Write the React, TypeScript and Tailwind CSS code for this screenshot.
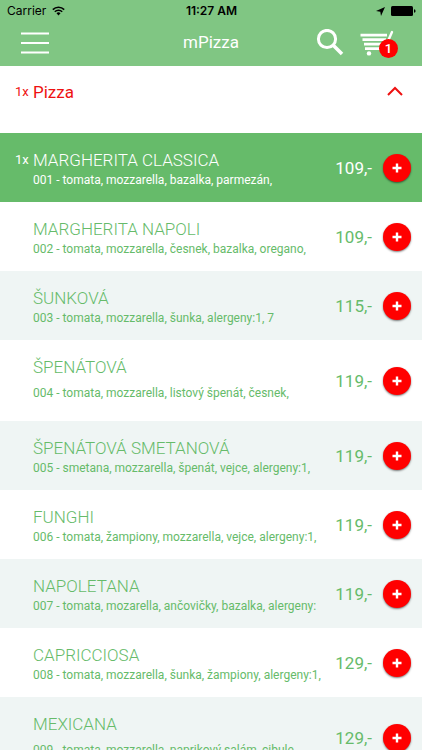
type Pizza = {
  code: string;
  name: string;
  detail: string;
  price: string;
  count?: number;
  tall?: boolean;
};

const pizzas: Pizza[] = [
  { code: '001', name: 'MARGHERITA CLASSICA', detail: 'tomata, mozzarella, bazalka, parmezán,', price: '109,-', count: 1 },
  { code: '002', name: 'MARGHERITA NAPOLI', detail: 'tomata, mozzarella, česnek, bazalka, oregano,', price: '109,-' },
  { code: '003', name: 'ŠUNKOVÁ', detail: 'tomata, mozzarella, šunka, alergeny:1, 7', price: '115,-' },
  { code: '004', name: 'ŠPENÁTOVÁ', detail: 'tomata, mozzarella, listový špenát, česnek,', price: '119,-', tall: true },
  { code: '005', name: 'ŠPENÁTOVÁ SMETANOVÁ', detail: 'smetana, mozzarella, špenát, vejce, alergeny:1,', price: '119,-' },
  { code: '006', name: 'FUNGHI', detail: 'tomata, žampiony, mozzarella, vejce, alergeny:1,', price: '119,-' },
  { code: '007', name: 'NAPOLETANA', detail: 'tomata, mozarella, ančovičky, bazalka, alergeny:', price: '119,-' },
  { code: '008', name: 'CAPRICCIOSA', detail: 'tomata, mozzarella, šunka, žampiony, alergeny:1,', price: '129,-' },
  { code: '009', name: 'MEXICANA', detail: 'tomata, mozzarella, paprikový salám, cibule,', price: '129,-', tall: true },
];

function StatusBar() {
  return (
    <div className="grid h-5 grid-cols-3 items-center pl-[7px] pr-[6px] pt-[2px] font-['Inter',sans-serif] text-xs text-black">
      <div className="flex items-center gap-[6px]">
        <span>Carrier</span>
        <svg width="13" height="10" viewBox="0 0 13 10" fill="none" stroke="currentColor" strokeWidth="1.6" aria-hidden="true">
          <path d="M.8 3.6a8.2 8.2 0 0 1 11.4 0" />
          <path d="M2.8 5.8a5.3 5.3 0 0 1 7.4 0" />
          <path d="M6.5 9.4 4.5 7.3a2.9 2.9 0 0 1 4 0Z" fill="currentColor" stroke="none" />
        </svg>
      </div>
      <span className="text-center font-semibold">11:27 AM</span>
      <div className="flex items-center justify-end gap-[6px]">
        <svg width="9" height="9" viewBox="0 0 9 9" fill="currentColor" aria-hidden="true">
          <path d="M9 0 5 9 4.3 4.7 0 4Z" />
        </svg>
        <svg width="25" height="10" viewBox="0 0 25 10" fill="currentColor" aria-hidden="true">
          <rect width="22" height="10" rx="1.5" />
          <path d="M23 3.2q1.6.3 1.6 1.8T23 6.8Z" />
        </svg>
      </div>
    </div>
  );
}

function NavBar() {
  return (
    <div className="grid h-[46px] grid-cols-[1fr_auto_1fr] items-center px-5">
      <button type="button" aria-label="Menu" className="justify-self-start text-white">
        <svg width="30" height="22" viewBox="0 0 30 22" fill="none" stroke="currentColor" strokeWidth="2" aria-hidden="true">
          <path d="M1 1.5h28M1 11h28M1 20.5h28" />
        </svg>
      </button>
      <h1 className="text-[17px] text-white">mPizza</h1>
      <div className="flex items-center justify-end gap-4 text-white">
        <button type="button" aria-label="Hledat">
          <svg width="28" height="28" viewBox="0 0 28 28" fill="none" stroke="currentColor" aria-hidden="true">
            <circle cx="11" cy="10" r="8.6" strokeWidth="3" />
            <path d="m17 16 9 9" strokeWidth="3.6" />
          </svg>
        </button>
        <button type="button" aria-label="Košík, 1 položka" className="relative mr-1">
          <svg width="38" height="28" viewBox="0 0 38 28" fill="none" stroke="currentColor" aria-hidden="true">
            <path d="M32 3 25 19" strokeWidth="2.4" strokeLinecap="round" />
            <path d="M.5 6.1h26.5M2.5 10.6h23.5M4 15.1h20M5 19.6h18" strokeWidth="2.6" />
            <circle cx="9" cy="24.4" r="2.2" fill="currentColor" stroke="none" />
          </svg>
          <span className="absolute left-[19px] top-[10px] flex size-[19px] items-center justify-center rounded-full bg-[#ff0000] text-[13px] font-medium">
            1
          </span>
        </button>
      </div>
    </div>
  );
}

function PizzaRow({ pizza }: { pizza: Pizza }) {
  const selected = pizza.count !== undefined;
  return (
    <li
      className={
        selected
          ? 'flex items-center bg-[#66bb6a] pr-[11px] text-white'
          : 'flex items-center bg-white pr-[11px] text-[#66bb6a] odd:bg-[#eff5f4]'
      }
    >
      <div className="min-w-0 flex-1 self-start pb-3 pt-[17px]">
        <div className="flex items-center">
          <span className="w-[33px] shrink-0 pl-[15px] text-[13px] leading-5">{selected ? `${pizza.count}x` : ''}</span>
          <h3 className="text-[17px] font-light leading-5">{pizza.name}</h3>
        </div>
        <p
          className={
            pizza.tall
              ? 'whitespace-nowrap pl-[33px] text-xs leading-8'
              : 'whitespace-nowrap pl-[33px] text-xs leading-5'
          }
        >
          {pizza.code} - {pizza.detail}
        </p>
      </div>
      <span className="mr-[11px] text-[17px] leading-5">{pizza.price}</span>
      <button
        type="button"
        aria-label={`Přidat ${pizza.name}`}
        className="flex size-7 shrink-0 items-center justify-center rounded-full bg-[#ff0000] text-white shadow-[0_1px_2px_rgba(0,0,0,0.5)]"
      >
        <svg width="10" height="10" viewBox="0 0 10 10" fill="none" stroke="currentColor" strokeWidth="2.4" aria-hidden="true">
          <path d="M5 .5v9M.5 5h9" />
        </svg>
      </button>
    </li>
  );
}

export default function App() {
  return (
    <div className="flex h-screen flex-col bg-white font-['Roboto',sans-serif]">
      <header className="shrink-0 bg-[#80c683]">
        <StatusBar />
        <NavBar />
      </header>
      <main className="min-h-0 flex-1 overflow-y-auto [scrollbar-width:none]">
        <h2>
          <button
            type="button"
            aria-expanded="true"
            className="flex w-full items-center pb-[31px] pr-[19px] pt-4 text-left text-[#ee1111]"
          >
            <span className="w-[33px] pl-[15px] text-[13px] leading-5">1x</span>
            <span className="flex-1 text-[17px] leading-5">Pizza</span>
            <svg width="16" height="12" viewBox="0 0 16 12" fill="none" stroke="currentColor" strokeWidth="2" aria-hidden="true">
              <path d="M1 9 8 2 15 9" />
            </svg>
          </button>
        </h2>
        <ul>
          {pizzas.map((pizza) => (
            <PizzaRow key={pizza.code} pizza={pizza} />
          ))}
        </ul>
      </main>
    </div>
  );
}
